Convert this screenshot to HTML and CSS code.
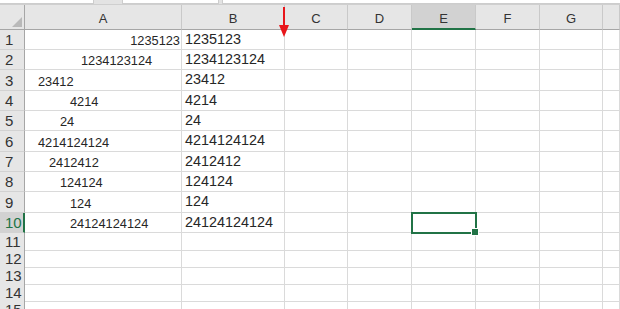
FILE: index.html
```html
<!DOCTYPE html>
<html lang="en">
<head>
    <meta charset="UTF-8">
    <meta name="viewport" content="width=device-width, initial-scale=1.0">
    <title>Sheet1</title>
    <link rel="stylesheet" href="styles.css">
</head>
<body>
    <div class="tabs">
        <div class="tab tab-one"></div>
        <div class="tab tab-two"></div>
        <div class="tab tab-three"></div>
    </div>

    <div class="sheet">
        <div class="row head">
            <div class="corner"><span class="corner-mark"></span></div>
            <div class="col">A</div>
            <div class="col">B</div>
            <div class="col">C</div>
            <div class="col">D</div>
            <div class="col active">E</div>
            <div class="col">F</div>
            <div class="col">G</div>
            <div class="col"></div>
        </div>

        <div class="row tall">
            <div class="num">1</div>
            <div class="cell a right">1235123</div>
            <div class="cell b">1235123</div>
            <div class="cell"></div><div class="cell"></div><div class="cell"></div><div class="cell"></div><div class="cell"></div><div class="cell"></div>
        </div>
        <div class="row tall">
            <div class="num">2</div>
            <div class="cell a lvl-4">1234123124</div>
            <div class="cell b">1234123124</div>
            <div class="cell"></div><div class="cell"></div><div class="cell"></div><div class="cell"></div><div class="cell"></div><div class="cell"></div>
        </div>
        <div class="row taller">
            <div class="num">3</div>
            <div class="cell a lvl-0">23412</div>
            <div class="cell b">23412</div>
            <div class="cell"></div><div class="cell"></div><div class="cell"></div><div class="cell"></div><div class="cell"></div><div class="cell"></div>
        </div>
        <div class="row tall">
            <div class="num">4</div>
            <div class="cell a lvl-3">4214</div>
            <div class="cell b">4214</div>
            <div class="cell"></div><div class="cell"></div><div class="cell"></div><div class="cell"></div><div class="cell"></div><div class="cell"></div>
        </div>
        <div class="row tall">
            <div class="num">5</div>
            <div class="cell a lvl-2">24</div>
            <div class="cell b">24</div>
            <div class="cell"></div><div class="cell"></div><div class="cell"></div><div class="cell"></div><div class="cell"></div><div class="cell"></div>
        </div>
        <div class="row taller">
            <div class="num">6</div>
            <div class="cell a lvl-0">4214124124</div>
            <div class="cell b">4214124124</div>
            <div class="cell"></div><div class="cell"></div><div class="cell"></div><div class="cell"></div><div class="cell"></div><div class="cell"></div>
        </div>
        <div class="row tall">
            <div class="num">7</div>
            <div class="cell a lvl-1">2412412</div>
            <div class="cell b">2412412</div>
            <div class="cell"></div><div class="cell"></div><div class="cell"></div><div class="cell"></div><div class="cell"></div><div class="cell"></div>
        </div>
        <div class="row tall">
            <div class="num">8</div>
            <div class="cell a lvl-2">124124</div>
            <div class="cell b">124124</div>
            <div class="cell"></div><div class="cell"></div><div class="cell"></div><div class="cell"></div><div class="cell"></div><div class="cell"></div>
        </div>
        <div class="row taller">
            <div class="num">9</div>
            <div class="cell a lvl-3">124</div>
            <div class="cell b">124</div>
            <div class="cell"></div><div class="cell"></div><div class="cell"></div><div class="cell"></div><div class="cell"></div><div class="cell"></div>
        </div>
        <div class="row tall">
            <div class="num active">10</div>
            <div class="cell a lvl-3">24124124124</div>
            <div class="cell b">24124124124</div>
            <div class="cell"></div><div class="cell"></div><div class="cell selected"></div><div class="cell"></div><div class="cell"></div><div class="cell"></div>
        </div>

        <div class="row short">
            <div class="num">11</div>
            <div class="cell"></div><div class="cell"></div><div class="cell"></div><div class="cell"></div><div class="cell"></div><div class="cell"></div><div class="cell"></div><div class="cell"></div>
        </div>
        <div class="row short">
            <div class="num">12</div>
            <div class="cell"></div><div class="cell"></div><div class="cell"></div><div class="cell"></div><div class="cell"></div><div class="cell"></div><div class="cell"></div><div class="cell"></div>
        </div>
        <div class="row short">
            <div class="num">13</div>
            <div class="cell"></div><div class="cell"></div><div class="cell"></div><div class="cell"></div><div class="cell"></div><div class="cell"></div><div class="cell"></div><div class="cell"></div>
        </div>
        <div class="row short">
            <div class="num">14</div>
            <div class="cell"></div><div class="cell"></div><div class="cell"></div><div class="cell"></div><div class="cell"></div><div class="cell"></div><div class="cell"></div><div class="cell"></div>
        </div>
        <div class="row short">
            <div class="num">15</div>
            <div class="cell"></div><div class="cell"></div><div class="cell"></div><div class="cell"></div><div class="cell"></div><div class="cell"></div><div class="cell"></div><div class="cell"></div>
        </div>

        <!-- red marker arrow between B and C -->
        <svg class="arrow" width="12" height="32" viewBox="0 0 12 32">
            <line x1="6" y1="0" x2="6" y2="22" stroke="#e8161b" stroke-width="2"/>
            <polygon points="1,18 11,18 6,30" fill="#e8161b"/>
        </svg>
    </div>
</body>
</html>
```

FILE: styles.css
```css
* {
    box-sizing: border-box;
}

body {
    margin: 0;
    padding: 0;
    width: 620px;
    height: 309px;
    overflow: hidden;
    background-color: #fff;
    font-family: "Liberation Sans", Arial, sans-serif;
    color: #262626;
}

.tabs {
    display: flex;
    height: 5px;
    background-color: #e3e3e3;
    border-bottom: 1px solid #cfcfcf;
}

.tab {
    height: 4px;
    background-color: #fff;
    border: 1px solid #cdcdcd;
    border-top: none;
}

.tab-one {
    width: 94px;
    border-left: none;
}

.tab-two {
    width: 97px;
    margin-left: 28px;
}

.tab-three {
    flex: 1;
    margin-left: 3px;
    border-right: none;
}

.sheet {
    position: relative;
}

.row {
    display: grid;
    grid-template-columns: 25px 157px 103px 63px 64px 64px 64px 63px 1fr;
}

.row.head {
    height: 25px;
}

.row.tall {
    height: 20px;
}

.row.taller {
    height: 21px;
}

.row.short {
    height: 17px;
}

/* header row */
.corner,
.col {
    background-color: #e6e6e6;
    border-right: 1px solid #c9c9c9;
    border-bottom: 1px solid #a6a6a6;
}

.corner {
    position: relative;
    border-right-color: #a6a6a6;
}

.corner-mark {
    position: absolute;
    right: 2px;
    bottom: 2px;
    width: 0;
    height: 0;
    border-left: 10px solid transparent;
    border-bottom: 10px solid #b9b9b9;
}

.col {
    display: flex;
    align-items: flex-end;
    justify-content: center;
    padding-bottom: 3px;
    font-size: 13px;
    color: #333;
}

.col.active {
    background-color: #d2d2d2;
    border-bottom: 2px solid #217346;
    padding-bottom: 2px;
}

/* row numbers */
.num {
    display: flex;
    align-items: center;
    padding-left: 5px;
    background-color: #e6e6e6;
    border-right: 1px solid #a6a6a6;
    border-bottom: 1px solid #d2d2d2;
    font-size: 15px;
    color: #333;
}

.num.active {
    background-color: #d2d2d2;
    border-right: 2px solid #217346;
    color: #217346;
}

/* data cells */
.cell {
    display: flex;
    border-right: 1px solid #dadada;
    border-bottom: 1px solid #dadada;
    white-space: nowrap;
}

.cell.a {
    align-items: flex-end;
    padding-bottom: 1px;
    font-size: 12.8px;
}

.cell.right {
    justify-content: flex-end;
    padding-right: 1px;
}

.cell.lvl-0 { padding-left: 13px; }
.cell.lvl-1 { padding-left: 24px; }
.cell.lvl-2 { padding-left: 35px; }
.cell.lvl-3 { padding-left: 45px; }
.cell.lvl-4 { padding-left: 56px; }

.cell.b {
    align-items: flex-start;
    padding-left: 3px;
    font-size: 14.4px;
    line-height: 18px;
}

.cell.selected {
    position: relative;
    outline: 2px solid #217346;
    outline-offset: -1px;
}

.cell.selected::after {
    content: "";
    position: absolute;
    right: -4px;
    bottom: -4px;
    width: 6px;
    height: 6px;
    background-color: #217346;
    border: 1px solid #fff;
}

.arrow {
    position: absolute;
    left: 278px;
    top: -4px;
    margin-top: 6px;
}
```
